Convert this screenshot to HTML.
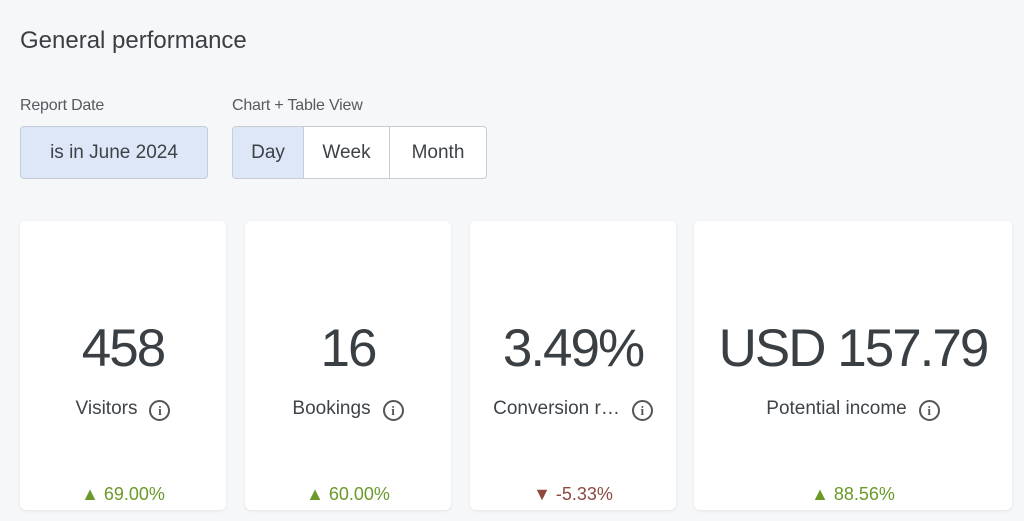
<!DOCTYPE html>
<html><head><style>
body{margin:0;width:1024px;height:521px;background:#f6f7f9;font-family:"Liberation Sans",sans-serif;color:#3d4247;position:relative;overflow:hidden}
.a{position:absolute}
.title{left:20px;top:27px;font-size:24px;color:#3a3f44}
.lbl{font-size:16px;color:#555a5f;top:97px;letter-spacing:-0.2px}
.btn{left:20px;top:126px;width:186px;height:51px;background:#dde7f7;border:1px solid #c5ccd6;border-radius:4px;font-size:19px;display:flex;align-items:center;justify-content:center}
.tg{left:232px;top:126px;height:51px;border:1px solid #c9cdd2;border-radius:4px;display:flex;background:#fff;overflow:hidden}
.tg div{display:flex;align-items:center;justify-content:center;font-size:19px;border-right:1px solid #c9cdd2}
.card{background:#fff;border-radius:6px;top:221px;height:289px;box-shadow:0 1px 3px rgba(0,0,0,.08)}
.card .num{position:absolute;left:0;right:0;top:97px;text-align:center;font-size:53px;color:#3a3f44;letter-spacing:-2px}
.nm{position:absolute;left:0;right:0;top:177px;text-align:center;font-size:19px;color:#3f4449}
.i{display:inline-block;width:17px;height:17px;border:2px solid #555;border-radius:50%;font-size:13px;line-height:17px;text-align:center;font-weight:bold;vertical-align:-1px;margin-left:12px;box-sizing:content-box;color:#555;font-family:"Liberation Serif",serif}
.ch{position:absolute;left:0;right:0;top:263px;text-align:center;font-size:18px}
.up{color:#6a9a2a}.dn{color:#8e4a40}
</style></head><body>
<div class="a title">General performance</div>
<div class="a lbl" style="left:20px">Report Date</div>
<div class="a lbl" style="left:232px">Chart + Table View</div>
<div class="a btn">is in June 2024</div>
<div class="a tg"><div style="width:70px;background:#dde7f7">Day</div><div style="width:85px">Week</div><div style="width:96px;border:none">Month</div></div>
<div class="a card" style="left:20px;width:206px"><div class="num">458</div><div class="nm">Visitors<span class="i">i</span></div><div class="ch up">▲ 69.00%</div></div>
<div class="a card" style="left:245px;width:206px"><div class="num">16</div><div class="nm">Bookings<span class="i">i</span></div><div class="ch up">▲ 60.00%</div></div>
<div class="a card" style="left:470px;width:206px"><div class="num">3.49%</div><div class="nm">Conversion r…<span class="i">i</span></div><div class="ch dn">▼ -5.33%</div></div>
<div class="a card" style="left:694px;width:318px"><div class="num">USD 157.79</div><div class="nm">Potential income<span class="i">i</span></div><div class="ch up">▲ 88.56%</div></div>
</body></html>
